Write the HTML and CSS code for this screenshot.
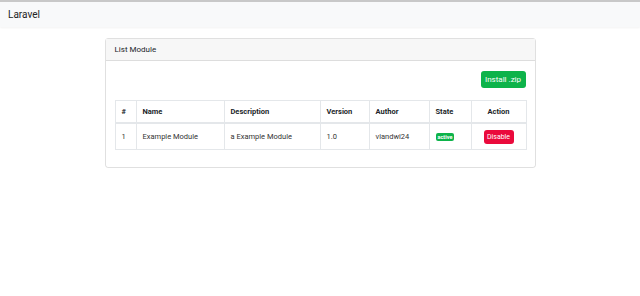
FILE: index.html
```html
<!DOCTYPE html>
<html lang="en">
<head>
  <meta charset="UTF-8">
  <title>Laravel</title>
  <link rel="stylesheet" href="styles.css">
</head>
<body>

  <nav class="navbar">
    <span class="brand">Laravel</span>
  </nav>

  <div class="container">
    <div class="card">
      <div class="card-header">List Module</div>
      <div class="card-body">
        <div class="toolbar">
          <button class="btn btn-success">Install .zip</button>
        </div>
        <table class="table">
          <colgroup>
            <col class="col-no">
            <col class="col-name">
            <col class="col-desc">
            <col class="col-ver">
            <col class="col-author">
            <col class="col-state">
            <col class="col-action">
          </colgroup>
          <thead>
            <tr>
              <th>#</th>
              <th>Name</th>
              <th>Description</th>
              <th>Version</th>
              <th>Author</th>
              <th>State</th>
              <th class="center">Action</th>
            </tr>
          </thead>
          <tbody>
            <tr>
              <td>1</td>
              <td>Example Module</td>
              <td>a Example Module</td>
              <td>1.0</td>
              <td>viandwi24</td>
              <td><span class="badge">active</span></td>
              <td class="center"><button class="btn btn-danger btn-sm">Disable</button></td>
            </tr>
          </tbody>
        </table>
      </div>
    </div>
  </div>

</body>
</html>
```

FILE: styles.css
```css
body {
  margin: 0;
  font-family: Roboto, "Noto Sans", sans-serif;
  color: #212529;
  background: #fff;
}

.navbar {
  height: 25px;
  background: #f8f9fa;
  border-top: 2px solid #c8c8c8;
  box-shadow: 0 1px 2px rgba(0,0,0,0.05);
  display: flex;
  align-items: center;
  padding: 0 8px;
}

.brand {
  font-size: 10px;
  color: #222;
}

.container {
  width: 431px;
  margin: 11px auto 0;
}

.card {
  border: 1px solid rgba(0,0,0,0.12);
  border-radius: 3px;
}

.card-header {
  height: 21px;
  line-height: 21px;
  padding: 0 9px;
  font-size: 8px;
  background: #f7f7f7;
  border-bottom: 1px solid rgba(0,0,0,0.1);
}

.card-body {
  padding: 10px 9px 17px;
}

.toolbar {
  display: flex;
  justify-content: flex-end;
}

.btn {
  border: none;
  border-radius: 3px;
  color: #fff;
  font-family: inherit;
  font-weight: 400;
  cursor: pointer;
}

.btn-success {
  background: #0db34a;
  height: 17px;
  width: 45px;
  font-size: 8px;
  padding: 0;
}

.btn-danger {
  background: #ea0a3c;
}

.btn-sm {
  height: 14px;
  width: 30px;
  font-size: 7px;
  padding: 0;
}

.table {
  width: 100%;
  margin-top: 12px;
  border-collapse: collapse;
  table-layout: fixed;
  font-size: 7.5px;
}

.table th,
.table td {
  border: 1px solid #e4e7ea;
  text-align: left;
  padding: 0 6px;
}

.table th {
  height: 21px;
  border-bottom: 2px solid #e4e7ea;
  font-weight: bold;
}

.table td {
  height: 25px;
  color: #333;
}

.table .center {
  text-align: center;
}

.col-no { width: 21px; }
.col-name { width: 88px; }
.col-desc { width: 96px; }
.col-ver { width: 49px; }
.col-author { width: 60px; }
.col-state { width: 42px; }
.col-action { width: 55px; }

.badge {
  display: inline-block;
  background: #0db34a;
  color: #fff;
  font-size: 5.5px;
  font-weight: bold;
  padding: 1px 2px;
  border-radius: 2px;
}
```
